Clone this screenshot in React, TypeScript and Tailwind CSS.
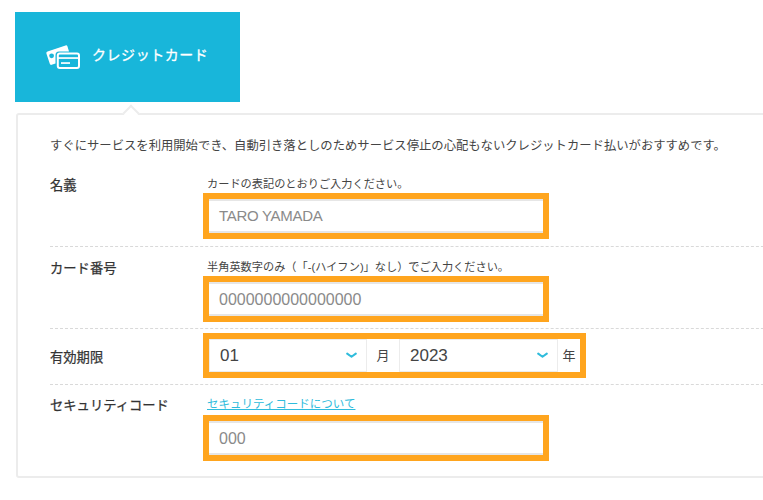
const cjk = "font-['Liberation_Sans','Noto_Sans_CJK_JP',sans-serif]";

function CardsIcon() {
  return (
    <svg width="34" height="24" viewBox="0 0 34 24" className="shrink-0" aria-hidden="true">
      <path d="M1.5 6.6 L19.5 0.4 Q21 0 21.5 1.4 L23 6.5 L13 6.5 Q9.5 6.5 9.5 10 L9.5 18.6 L5.6 19.8 Q4.2 20.2 3.8 18.8 L0.4 8.6 Q0 7.1 1.5 6.6 Z" fill="#fff" />
      <circle cx="5.6" cy="10.8" r="2.4" fill="#18b6da" />
      <rect x="11.8" y="8.6" width="21.2" height="14.4" rx="2" fill="#18b6da" stroke="#fff" strokeWidth="2" />
      <rect x="11.8" y="12.2" width="21.2" height="1.7" fill="#fff" />
      <rect x="15" y="17.2" width="9" height="1.7" fill="#fff" />
    </svg>
  );
}

function Chevron() {
  return (
    <svg width="11" height="7" viewBox="0 0 11 7" aria-hidden="true">
      <path d="M1.2 1.6 L5.5 4.8 L9.8 1.6" fill="none" stroke="#2fbcdc" strokeWidth="2" strokeLinecap="round" strokeLinejoin="round" />
    </svg>
  );
}

function Highlighted({ value, text }: { value: string; text: string }) {
  return (
    <div className="box-border h-[46px] w-[346px] border-[6px] border-[#ffa51e]">
      <div className={`flex h-full items-center border-t-2 border-b-2 border-t-[#e6e6e6] border-b-[#e6e6e6] bg-white pl-[10px] pt-px text-[#8a8a8a] ${text}`}>
        {value}
      </div>
    </div>
  );
}

function SelectBox({ value, width }: { value: string; width: string }) {
  return (
    <div className={`flex h-[33px] items-center justify-between border border-[#ececec] bg-white pl-[10px] pr-[9px] text-[17px] text-[#444] ${width}`}>
      <span>{value}</span>
      <Chevron />
    </div>
  );
}

export default function App() {
  return (
    <div className={`h-[500px] w-[763px] overflow-hidden bg-white pt-3 pl-[15px] [text-spacing-trim:space-all] ${cjk}`}>
      <div className="flex h-[90px] w-[225px] items-center bg-[#18b6da] pl-[31px] text-white">
        <CardsIcon />
        <span className="ml-[12px] -mt-[3px] text-[14px] font-normal tracking-[0.55px] [-webkit-text-stroke:0.3px_#fff]">クレジットカード</span>
      </div>
      <div className="relative mt-[11px] ml-px box-border h-[365px] w-[800px] rounded-[3px] border-2 border-[#ececec] pt-[22px] pl-[32px]">
        <div className="absolute -top-[8px] left-[107px] size-[12px] rotate-45 border-t-2 border-l-2 border-[#ececec] bg-white" />
        <p className="text-[12.33px] leading-[18px] text-[#444]">
          すぐにサービスを利用開始でき、自動引き落としのためサービス停止の心配もないクレジットカード払いがおすすめです。
        </p>

        <div className="mt-[20px] flex h-[72px] border-b border-dashed border-[#d9d9d9]">
          <div className="w-[153px] pt-px text-[13.3px] leading-[20px] text-[#333] [-webkit-text-stroke:0.25px_#333]">名義</div>
          <div>
            <div className="pl-[4px] text-[11.2px] leading-[18px] text-[#444]">カードの表記のとおりご入力ください。</div>
            <Highlighted value="TARO YAMADA" text="text-[15px] tracking-[-0.3px]" />
          </div>
        </div>

        <div className="flex h-[82px] border-b border-dashed border-[#d9d9d9] pt-[11px]">
          <div className="w-[153px] pt-px text-[13.3px] leading-[20px] text-[#333] [-webkit-text-stroke:0.25px_#333]">カード番号</div>
          <div>
            <div className="pl-[4px] text-[11.2px] leading-[18px] text-[#444]">半角英数字のみ（「-(ハイフン)」なし）でご入力ください。</div>
            <Highlighted value="0000000000000000" text="text-[16px]" />
          </div>
        </div>

        <div className="flex h-[56px] items-start border-b border-dashed border-[#d9d9d9] pt-[4px]">
          <div className="w-[153px] pt-[15px] text-[13.3px] leading-[20px] text-[#333] [-webkit-text-stroke:0.25px_#333]">有効期限</div>
          <div className="box-border flex h-[45px] w-[383px] items-center border-[6px] border-[#ffa51e] bg-white">
            <SelectBox value="01" width="w-[158px]" />
            <span className="w-[32px] text-center text-[13px] text-[#444]">月</span>
            <SelectBox value="2023" width="w-[159px]" />
            <span className="flex-1 text-center text-[13px] text-[#444]">年</span>
          </div>
        </div>

        <div className="flex pt-[9px]">
          <div className="w-[153px] pt-[2px] text-[13.3px] leading-[20px] text-[#333] [-webkit-text-stroke:0.25px_#333]">セキュリティコード</div>
          <div>
            <a className="block pl-[4px] text-[11.5px] leading-[20px] text-[#2fbcdc] underline">セキュリティコードについて</a>
            <div className="mt-[1px]">
              <Highlighted value="000" text="text-[16px]" />
            </div>
          </div>
        </div>
      </div>
    </div>
  );
}
